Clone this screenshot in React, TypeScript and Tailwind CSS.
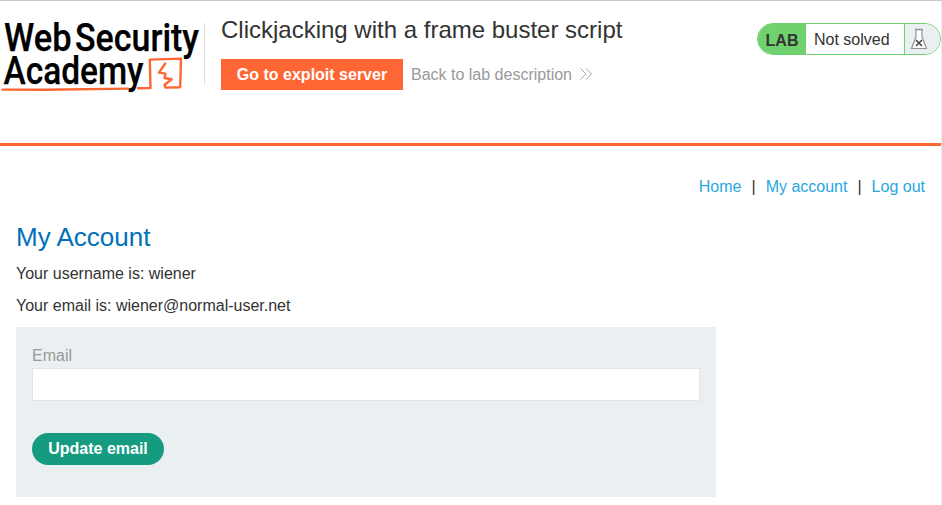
import React from "react";

function AcademyLogo() {
  return (
    <svg
      className="block h-[85px] w-[204px] shrink-0"
      viewBox="0 15 204 85"
      role="img"
      aria-label="Web Security Academy"
    >
      <g
        fill="#000"
        stroke="#000"
        strokeWidth="0.25"
        fontFamily="Roboto, 'Liberation Sans', sans-serif"
        fontWeight="500"
        fontSize="38"
      >
        <text x="4" y="51.3" textLength="67.5" lengthAdjust="spacingAndGlyphs">Web</text>
        <text x="75" y="51.3" textLength="124" lengthAdjust="spacingAndGlyphs">Security</text>
        <text x="3.5" y="83.8" textLength="140" lengthAdjust="spacingAndGlyphs">Academy</text>
      </g>
      <g fill="none" stroke="#ff6633" strokeWidth="2.4" strokeLinejoin="round" strokeLinecap="round">
        <path d="M2.5 89.6L44 89.8L128 88.6" />
        <path d="M138 88.3L150.5 88L149.8 59.6L181 58.6L180.2 87.2L165.5 87.6L164.5 85L171.6 79.2L164.5 78L165.5 73.6L159 72.6L165.2 63.5" />
      </g>
    </svg>
  );
}

function Flask() {
  return (
    <svg className="block h-[22px] w-[18px]" viewBox="0 0 18 22" fill="none">
      <path d="M6 1.5V9L1.5 20.5H16.5L12 9V1.5Z" fill="#fff" stroke="#929292" strokeWidth="1.2" />
      <path d="M5 1.5H13" stroke="#929292" strokeWidth="1.4" />
      <path d="M6 12L12 18M12 12L6 18" stroke="#444" strokeWidth="1.5" />
    </svg>
  );
}

function LabStatus() {
  return (
    <div className="mt-[22px] flex h-8 w-[184px] shrink-0 overflow-hidden rounded-full border border-[#70d16f] bg-white text-[#333332]">
      <span className="flex w-12 items-center justify-center bg-[#70d16f] pt-[3px] font-bold leading-5">LAB</span>
      <span className="flex-1 pl-2 pt-[6px] leading-5">Not solved</span>
      <span className="flex w-[36px] items-center border-l border-[#70d16f] bg-[#eaeff2] pl-[5px]">
        <Flask />
      </span>
    </div>
  );
}

export default function App() {
  return (
    <div className="h-[505px] w-[942px] overflow-hidden border-r border-t border-r-[#ececec] border-t-[#c8c8c8] bg-white font-['Liberation_Sans',Arial,sans-serif] text-base leading-5 text-[#333332]">
      <header className="flex h-[145px] items-start border-b-[3px] border-[#ff6633]">
        <div className="flex pt-[14px]">
          <AcademyLogo />
        </div>
        <div className="mt-[22px] h-[62px] w-px shrink-0 bg-[#dedede]" />
        <div className="flex-1 pl-4 pt-[15px]">
          <h1 className="text-2xl leading-7">Clickjacking with a frame buster script</h1>
          <div className="mt-[15px] flex items-center gap-2">
            <a className="flex h-[31px] w-[182px] items-center justify-center bg-[#ff6633] font-bold text-white">
              Go to exploit server
            </a>
            <a className="flex items-center gap-2 text-[#999]">
              Back to lab description
              <svg className="mb-px h-3 w-3" viewBox="0 0 12 12" fill="none" stroke="#999" strokeWidth="0.9">
                <path d="M0.5 0.5L6 6L0.5 11.5M6 0.5L11.5 6L6 11.5" />
              </svg>
            </a>
          </div>
        </div>
        <LabStatus />
      </header>
      <main className="px-4">
        <nav className="flex justify-end gap-2.5 pt-[31px] leading-5">
          <a className="text-[#29a7df]">Home</a>
          <span>|</span>
          <a className="text-[#29a7df]">My account</a>
          <span>|</span>
          <a className="text-[#29a7df]">Log out</a>
        </nav>
        <h2 className="mt-[25px] text-[26px] leading-[30px] text-[#0071b8]">My Account</h2>
        <p className="mt-[12px]">Your username is: wiener</p>
        <p className="mt-3">Your email is: wiener@normal-user.net</p>
        <form className="mt-[11px] h-[170px] w-[700px] bg-[#eaeff2] px-4 pt-[19px]" onSubmit={(e) => e.preventDefault()}>
          <label className="block text-[#999]" htmlFor="email">Email</label>
          <input id="email" type="email" className="mt-[2px] block h-[33px] w-full border border-[#e4e4e4] bg-white px-2 outline-none" />
          <button className="mt-8 flex h-8 w-[132px] items-center justify-center rounded-full bg-[#159c80] font-bold text-white">
            Update email
          </button>
        </form>
      </main>
    </div>
  );
}
